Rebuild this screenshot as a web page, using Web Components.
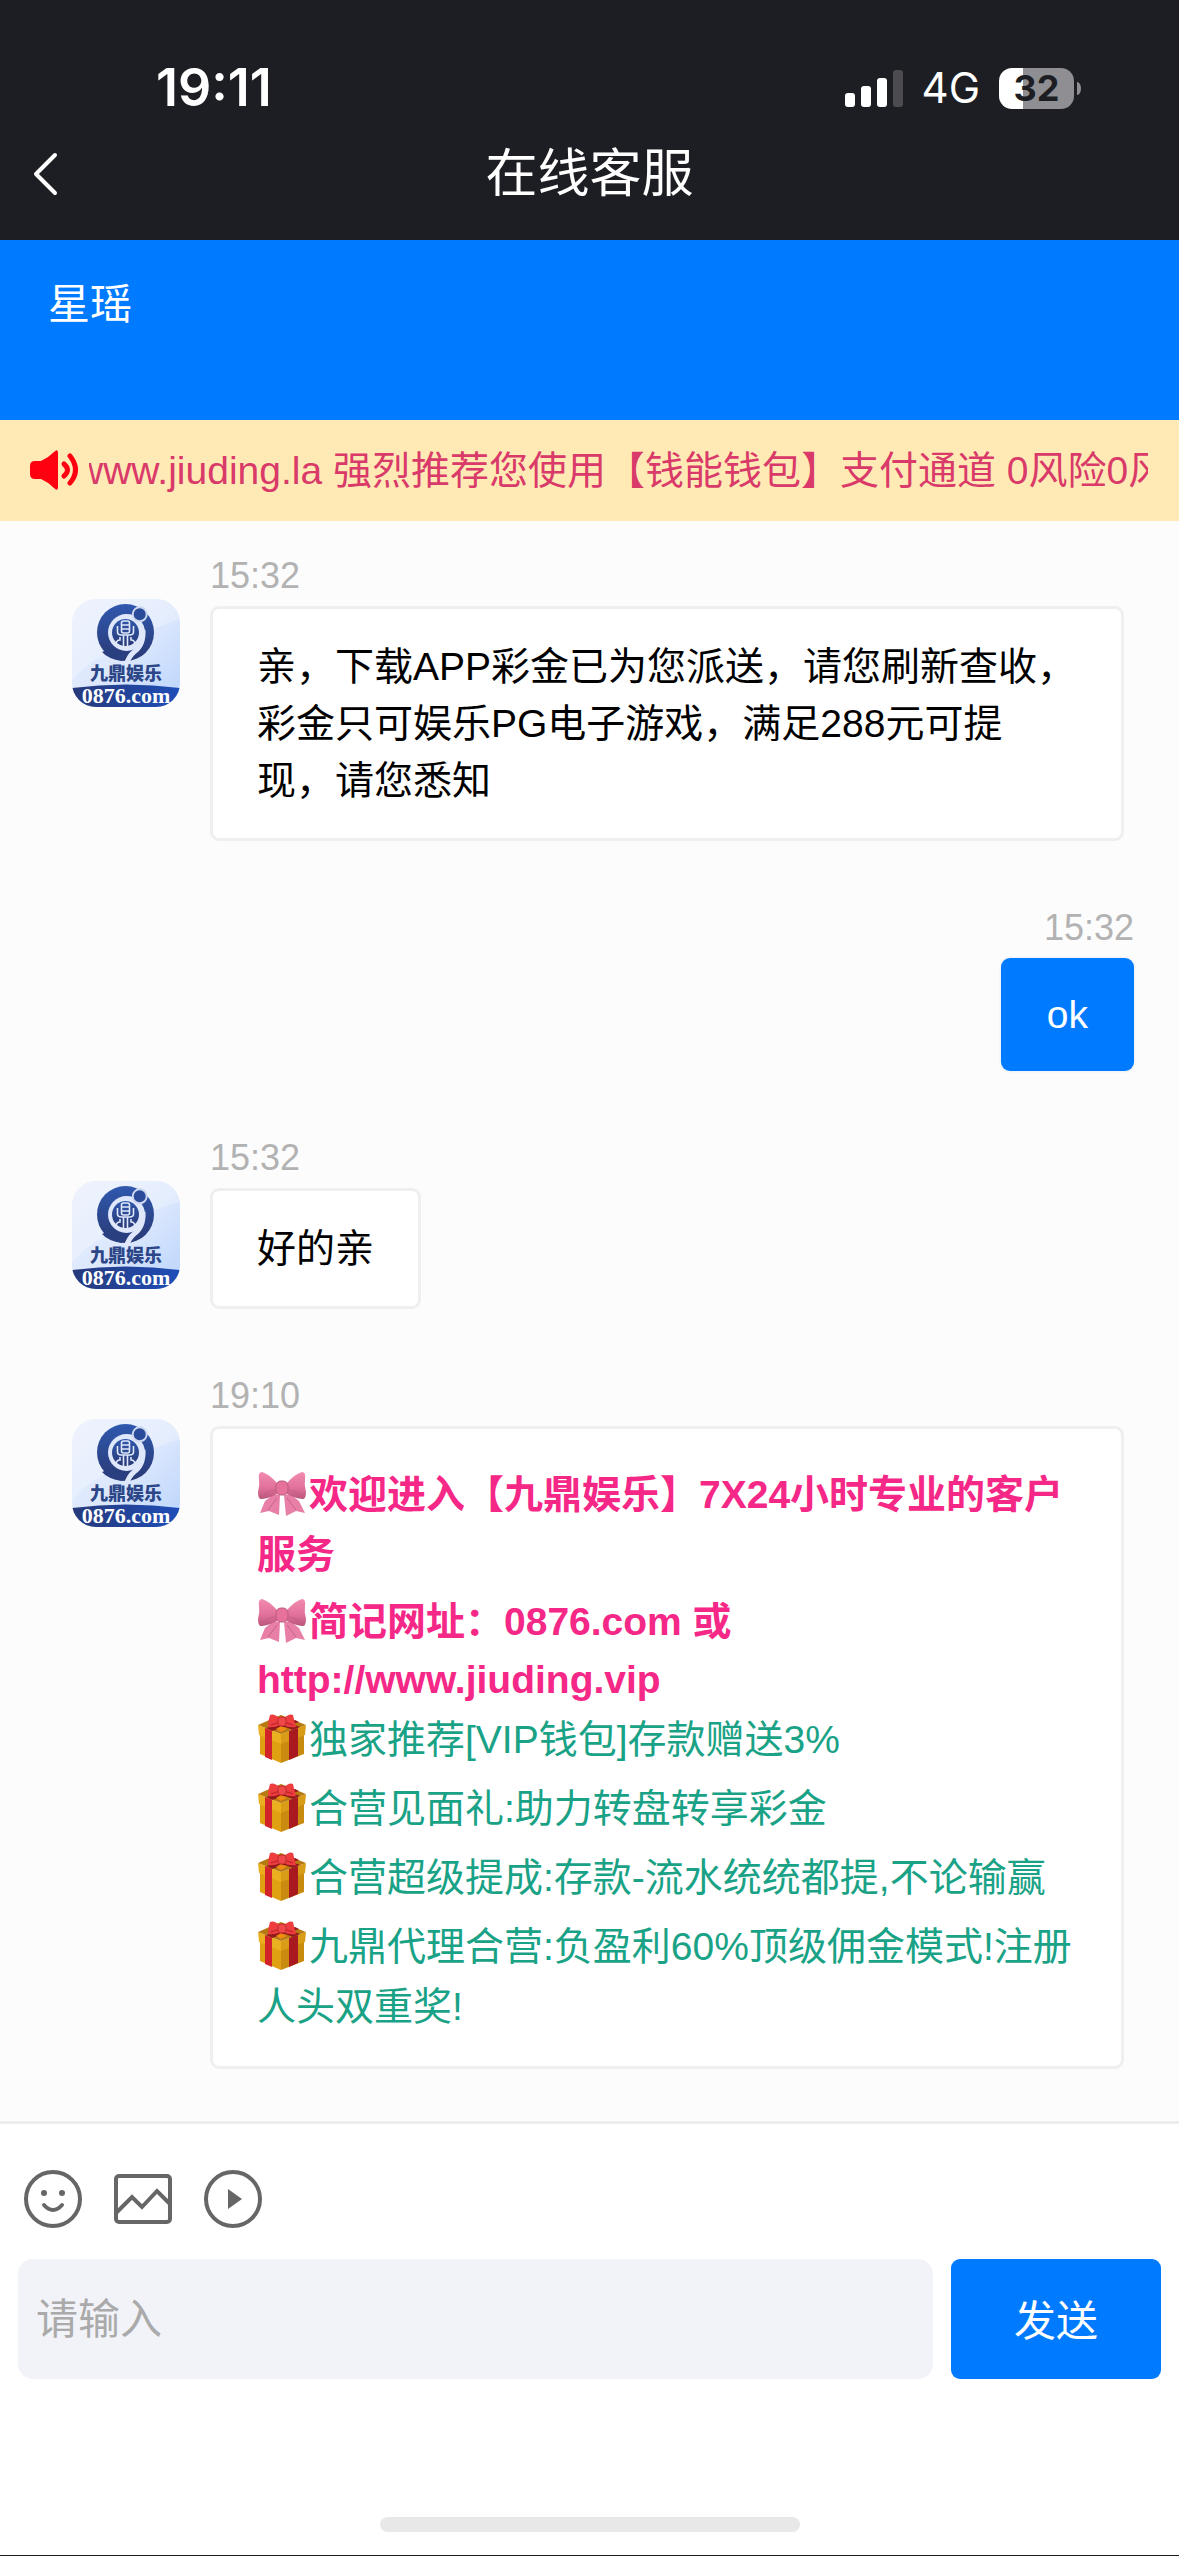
<!DOCTYPE html>
<html lang="zh-CN">
<head>
<meta charset="UTF-8">
<meta name="viewport" content="width=device-width, initial-scale=1.0">
<title>在线客服</title>
<style>
    body {
        margin: 0;
        min-height: 100vh;
        display: flex;
        flex-direction: column;
        background-color: #fcfcfc;
        font-family: "Liberation Sans", "Noto Sans CJK SC", sans-serif;
        color: #000;
    }
</style>
</head>
<body>
    <phone-status time="19:11" network="4G" battery="32"></phone-status>
    <page-header>在线客服</page-header>
    <agent-banner>星瑶</agent-banner>
    <notice-bar offset="14">www.jiuding.la 强烈推荐您使用【钱能钱包】支付通道 0风险0风险</notice-bar>
    <message-list>
        <chat-message time="15:32">亲，下载APP彩金已为您派送，请您刷新查收，彩金只可娱乐PG电子游戏，满足288元可提现，请您悉知</chat-message>
        <chat-message time="15:32" mine>ok</chat-message>
        <chat-message time="15:32">好的亲</chat-message>
        <chat-message time="19:10">
            <promo-line icon="bow">欢迎进入【九鼎娱乐】7X24小时专业的客户服务</promo-line>
            <promo-line icon="bow">简记网址：0876.com 或 <span slot="link">http://www.jiuding.vip</span></promo-line>
            <promo-line icon="gift" tight>独家推荐[VIP钱包]存款赠送3%</promo-line>
            <promo-line icon="gift">合营见面礼:助力转盘转享彩金</promo-line>
            <promo-line icon="gift">合营超级提成:存款-流水统统都提,不论输赢</promo-line>
            <promo-line icon="gift">九鼎代理合营:负盈利60%顶级佣金模式!注册人头双重奖!</promo-line>
        </chat-message>
    </message-list>
    <chat-composer></chat-composer>
    <home-indicator></home-indicator>

<script>
class PhoneStatus extends HTMLElement {
    connectedCallback() {
        this.attachShadow({ mode: 'open' });
        this.shadowRoot.innerHTML = `
            <style>
                :host {
                    display: flex;
                    justify-content: space-between;
                    align-items: center;
                    padding: 58px 98px 22px 156px;
                    background-color: #1d1e23;
                    color: #fff;
                    font-family: Inter, "Liberation Sans", sans-serif;
                }
                .time {
                    font-size: 52px;
                    line-height: 60px;
                    font-weight: 600;
                }
                .right {
                    display: flex;
                    align-items: center;
                    gap: 19px;
                }
                svg {
                    display: block;
                }
                .network {
                    font-size: 42px;
                    line-height: 60px;
                }
                .battery {
                    display: flex;
                    align-items: center;
                    gap: 3px;
                }
                .level {
                    width: 75px;
                    height: 41px;
                    border-radius: 13px;
                    background: linear-gradient(90deg, #fff 32%, #8e8e93 32%);
                    color: #1d1e23;
                    font-size: 36px;
                    line-height: 41px;
                    font-weight: 700;
                    text-align: center;
                }
                .tip {
                    width: 4px;
                    height: 13px;
                    border-radius: 0 4px 4px 0 / 0 7px 7px 0;
                    background-color: #8e8e93;
                }
            </style>
            <div class="time">${this.getAttribute('time')}</div>
            <div class="right">
                <svg width="58" height="38" viewBox="0 0 58 38" fill="#fff">
                    <rect x="0" y="24" width="10" height="14" rx="3"/>
                    <rect x="16" y="17" width="10" height="21" rx="3"/>
                    <rect x="32" y="9" width="10" height="29" rx="3"/>
                    <rect x="48" y="1" width="10" height="37" rx="3" fill="#4c4c50"/>
                </svg>
                <span class="network">${this.getAttribute('network')}</span>
                <div class="battery">
                    <div class="level">${this.getAttribute('battery')}</div>
                    <div class="tip"></div>
                </div>
            </div>
        `;
    }
}

class PageHeader extends HTMLElement {
    connectedCallback() {
        this.attachShadow({ mode: 'open' });
        this.shadowRoot.innerHTML = `
            <style>
                :host {
                    display: grid;
                    grid-template-columns: 90px 1fr 90px;
                    align-items: center;
                    padding: 4px 0 36px;
                    background-color: #1d1e23;
                    color: #fff;
                }
                button {
                    display: flex;
                    padding: 0 0 0 28px;
                    border: none;
                    background: none;
                    cursor: pointer;
                }
                h1 {
                    margin: 0;
                    font-size: 52px;
                    line-height: 60px;
                    font-weight: 400;
                    text-align: center;
                }
            </style>
            <button type="button" aria-label="返回">
                <svg width="30" height="46" viewBox="0 0 30 46" fill="none" stroke="#fff" stroke-width="4" stroke-linecap="round" stroke-linejoin="round">
                    <path d="M27 4 8 23l19 19"/>
                </svg>
            </button>
            <h1><slot></slot></h1>
        `;
    }
}

class AgentBanner extends HTMLElement {
    connectedCallback() {
        this.attachShadow({ mode: 'open' });
        this.shadowRoot.innerHTML = `
            <style>
                :host {
                    display: block;
                    padding: 35px 48px 85px;
                    background-color: #007aff;
                    color: #fff;
                    font-size: 42px;
                    line-height: 60px;
                }
            </style>
            <slot></slot>
        `;
    }
}

class NoticeBar extends HTMLElement {
    connectedCallback() {
        this.attachShadow({ mode: 'open' });
        this.shadowRoot.innerHTML = `
            <style>
                :host {
                    display: flex;
                    align-items: center;
                    gap: 11px;
                    padding: 21px 31px 20px 28px;
                    background-color: #ffeab6;
                    color: #d93a69;
                    font-size: 39px;
                    line-height: 60px;
                }
                svg {
                    flex: none;
                }
                .track {
                    flex: 1;
                    min-width: 0;
                    overflow: hidden;
                    white-space: nowrap;
                }
            </style>
            <svg width="50" height="42" viewBox="0 0 50 42" fill="none" stroke="#ff0010" stroke-width="5" stroke-linecap="round">
                <path d="M7 11h6Q20 8 26 2q4-4 4 1v34q0 5-4 1-6-6-13-9H7q-5 0-5-5v-8q0-5 5-5z" fill="#ff0010" stroke="none"/>
                <path d="M36 14q7 6 0 12"/>
                <path d="M42 6q11 14 0 27"/>
            </svg>
            <div class="track"><slot></slot></div>
        `;

        // Start the ticker part way through its text
        this.shadowRoot.querySelector('.track').scrollLeft = Number(this.getAttribute('offset'));
    }
}

class MessageList extends HTMLElement {
    connectedCallback() {
        this.attachShadow({ mode: 'open' });
        this.shadowRoot.innerHTML = `
            <style>
                :host {
                    flex: 1;
                    display: flex;
                    flex-direction: column;
                    gap: 65px;
                    padding: 33px 45px 48px 72px;
                }
            </style>
            <slot></slot>
        `;
    }
}

class ChatAvatar extends HTMLElement {
    connectedCallback() {
        this.attachShadow({ mode: 'open' });
        this.shadowRoot.innerHTML = `
            <style>
                :host {
                    display: block;
                    flex: none;
                    width: 108px;
                    height: 108px;
                    border-radius: 24px;
                    overflow: hidden;
                }
                svg {
                    display: block;
                }
            </style>
            <svg width="108" height="108" viewBox="0 0 108 108">
                <defs>
                    <linearGradient id="sky" x1="0" y1="0" x2="1" y2="1">
                        <stop offset="0" stop-color="#e9effd"/>
                        <stop offset=".5" stop-color="#dde8fd"/>
                        <stop offset="1" stop-color="#bad4fc"/>
                    </linearGradient>
                    <linearGradient id="navy" x1="0" y1="0" x2="0" y2="1">
                        <stop offset="0" stop-color="#2f58ae"/>
                        <stop offset="1" stop-color="#2a3a75"/>
                    </linearGradient>
                    <linearGradient id="band" x1="0" y1="0" x2="1" y2="0">
                        <stop offset="0" stop-color="#27397a"/>
                        <stop offset="1" stop-color="#1f4eb8"/>
                    </linearGradient>
                </defs>
                <rect width="108" height="108" fill="url(#sky)"/>
                <path d="M0 0h108v20Q60 36 34 55 12 66 0 82z" fill="#fff" opacity=".25"/>
                <circle cx="53.500" cy="33.500" r="28.500" fill="url(#navy)"/>
                <circle cx="54.500" cy="33.500" r="18.500" fill="#dfe7fa"/>
                <path d="M71 31Q72 46 62 53 57 57 54 66" fill="none" stroke="#dfe7fa" stroke-width="5"/>
                <path d="M40 49q8 6 17 4l-7 9q-14-2-20-9z" fill="#2a3f80"/>
                <circle cx="53.500" cy="33.500" r="13.500" fill="url(#navy)"/>
                <g fill="none" stroke="#dfe7fa" stroke-width="1.600">
                    <rect x="49.500" y="22" width="8" height="12" rx="2"/>
                    <path d="M49.500 26h8M49.500 30h8M45.500 27v6q0 3 4 3h8q4 0 4-3v-6M51.500 36v11M55.500 36v11M48 38v3q-4 0-4 5M59 38v3q4 0 4 5"/>
                </g>
                <circle cx="67.700" cy="15.300" r="7" fill="#2a4b99" stroke="#cdd8f0" stroke-width="2"/>
                <text x="54" y="81" text-anchor="middle" font-family="Noto Sans CJK SC, sans-serif" font-size="18" font-weight="900" fill="#2c4688">九鼎娱乐</text>
                <path d="M0 89q54-7 108 0v19H0z" fill="url(#band)"/>
                <text x="54" y="104" text-anchor="middle" font-family="Liberation Serif, serif" font-size="22" font-weight="700" fill="#fff">0876.com</text>
            </svg>
        `;
    }
}

class ChatMessage extends HTMLElement {
    connectedCallback() {
        const mine = this.hasAttribute('mine');
        this.attachShadow({ mode: 'open' });
        this.shadowRoot.innerHTML = `
            <style>
                :host {
                    display: flex;
                    gap: 30px;
                    margin-right: 10px;
                }
                :host([mine]) {
                    justify-content: flex-end;
                    margin-right: 0;
                }
                chat-avatar {
                    margin-top: 45px;
                }
                .body {
                    display: flex;
                    flex-direction: column;
                    align-items: flex-start;
                    gap: 9px;
                    min-width: 0;
                }
                :host([mine]) .body {
                    align-items: flex-end;
                }
                time {
                    color: #b2b2b2;
                    font-size: 36px;
                    line-height: 43px;
                }
                .bubble {
                    padding: 29px 44px;
                    border: 3px solid #efefef;
                    border-radius: 9px;
                    background-color: #fff;
                    font-size: 39px;
                    line-height: 57px;
                }
                :host([mine]) .bubble {
                    padding: 28px 46px;
                    border: none;
                    box-shadow: 0 0 3px #dde3ea;
                    background-color: #007aff;
                    color: #fff;
                }
            </style>
            ${mine ? '' : '<chat-avatar></chat-avatar>'}
            <div class="body">
                <time>${this.getAttribute('time')}</time>
                <div class="bubble"><slot></slot></div>
            </div>
        `;
    }
}

const EMOJI = {
    bow: `
        <svg width="50" height="46" viewBox="0 0 50 46">
            <defs>
                <linearGradient id="silk" x1="0" y1="0" x2="0" y2="1">
                    <stop offset="0" stop-color="#f38bb0"/>
                    <stop offset=".6" stop-color="#e0709a"/>
                    <stop offset="1" stop-color="#b8557a"/>
                </linearGradient>
            </defs>
            <path d="M17 23 8 30 3 42l9-2 10 4 1-20z" fill="#e77fa6"/>
            <path d="m33 23 9 7 6 12-9-2-10 5-2-21z" fill="#e77fa6"/>
            <path d="m20 27-9 12M30 27l9 12" fill="none" stroke="#c7658b" stroke-width="1"/>
            <path d="M20 12Q12 3 5 1 1 1 2 8q1 6-1 13 0 8 4 7 9-1 16-6z" fill="url(#silk)"/>
            <path d="M30 12Q38 3 45 1q4 0 3 7-1 6 1 13 0 8-4 7-9-1-16-6z" fill="url(#silk)"/>
            <path d="M19 19q-6 0-11 4M31 19q6 0 11 4" fill="none" stroke="#bb5c80" stroke-width="1.200" opacity=".5"/>
            <rect x="19" y="10" width="12" height="14" rx="5" fill="#e6719b" stroke="#bd5b80"/>
        </svg>`,
    gift: `
        <svg width="50" height="50" viewBox="0 0 50 50">
            <path d="M3 18v22l21 9V24z" fill="#dfa012"/>
            <path d="M47 18v22l-23 9V24z" fill="#c98a10"/>
            <path d="m1 11 23 9v10L2 21z" fill="#eab020"/>
            <path d="m49 11-25 9v10l24-9z" fill="#d99c16"/>
            <path d="M1 11 24 1l25 10-25 9z" fill="#b77a12"/>
            <path d="m12 7 24 9 7-3L18 4zM38 6 9 14l6 3 27-9z" fill="#921a1c"/>
            <path d="m8 14 7 3v29l-7-3z" fill="#d2232a"/>
            <path d="m32 17 9-3v28l-9 4z" fill="#a81a20"/>
            <path d="m19 15 5-3 6 3-6 3z" fill="#ef8a12"/>
            <path d="M24 5Q17-1 13 1q-2 6-2 12 8 1 13-3zM26 5q6-6 10-4 1 5 3 12-9 1-13-3z" fill="#ee3d3f"/>
            <path d="m23 8-9 3m13-3 9 3" stroke="#b9252c" stroke-width="1.300"/>
            <rect x="21" y="3" width="8" height="9" rx="3" fill="#f04848" stroke="#bd2a30"/>
        </svg>`
};

class PromoLine extends HTMLElement {
    connectedCallback() {
        this.attachShadow({ mode: 'open' });
        this.shadowRoot.innerHTML = `
            <style>
                :host {
                    display: block;
                    padding-top: 9px;
                    line-height: 60px;
                    color: #1aa286;
                }
                :host([icon="bow"]) {
                    padding-top: 7px;
                    color: #f52887;
                    font-weight: 700;
                }
                :host([tight]) {
                    padding-top: 3px;
                }
                .icon {
                    display: inline-flex;
                    align-items: center;
                    width: 52px;
                    height: 58px;
                    vertical-align: top;
                }
                ::slotted([slot="link"]) {
                    display: block;
                    line-height: 55px;
                }
            </style>
            <span class="icon">${EMOJI[this.getAttribute('icon')]}</span><slot></slot><slot name="link"></slot>
        `;
    }
}

class ChatComposer extends HTMLElement {
    connectedCallback() {
        this.attachShadow({ mode: 'open' });
        this.shadowRoot.innerHTML = `
            <style>
                :host {
                    display: flex;
                    flex-direction: column;
                    gap: 30px;
                    padding: 45px 18px 0;
                    border-top: 3px solid #ededed;
                    background-color: #fff;
                }
                .tools {
                    display: flex;
                    gap: 30px;
                    padding-left: 5px;
                }
                button {
                    padding: 0;
                    border: none;
                    background: none;
                    cursor: pointer;
                }
                svg {
                    display: block;
                }
                form {
                    display: flex;
                    gap: 18px;
                }
                input,
                .send {
                    box-sizing: border-box;
                    height: 120px;
                    font-family: inherit;
                    font-size: 42px;
                }
                input {
                    flex: 1;
                    min-width: 0;
                    padding: 2px 18px 0;
                    border: none;
                    border-radius: 15px;
                    outline: none;
                    background-color: #f2f3f8;
                }
                input::placeholder {
                    color: #aaa;
                    opacity: 1;
                }
                .send {
                    width: 210px;
                    padding-bottom: 4px;
                    border-radius: 9px;
                    background-color: #007aff;
                    color: #fff;
                }
            </style>
            <div class="tools">
                <button type="button" aria-label="表情">
                    <svg width="60" height="60" viewBox="0 0 60 60" fill="none" stroke="#666" stroke-width="4" stroke-linecap="round">
                        <circle cx="30" cy="30" r="27"/>
                        <path d="M21 36q9 10 18 0"/>
                        <circle cx="21" cy="24" r="3" fill="#666" stroke="none"/>
                        <circle cx="39" cy="24" r="3" fill="#666" stroke="none"/>
                    </svg>
                </button>
                <button type="button" aria-label="图片">
                    <svg width="60" height="60" viewBox="0 0 60 60" fill="none" stroke="#666" stroke-width="4">
                        <rect x="3" y="7" width="54" height="46" rx="3"/>
                        <path d="M3 44 19 28l10 10 15-16 13 13"/>
                    </svg>
                </button>
                <button type="button" aria-label="视频">
                    <svg width="60" height="60" viewBox="0 0 60 60" fill="none" stroke="#666" stroke-width="4">
                        <circle cx="30" cy="30" r="27"/>
                        <path d="m25 20 14 10-14 10z" fill="#666" stroke="none"/>
                    </svg>
                </button>
            </div>
            <form>
                <input type="text" placeholder="请输入" aria-label="请输入">
                <button class="send" type="button">发送</button>
            </form>
        `;
    }
}

class HomeIndicator extends HTMLElement {
    connectedCallback() {
        this.attachShadow({ mode: 'open' });
        this.shadowRoot.innerHTML = `
            <style>
                :host {
                    display: flex;
                    justify-content: center;
                    padding: 138px 0 23px;
                    border-bottom: 1px solid #1d1e23;
                    background-color: #fff;
                }
                div {
                    width: 420px;
                    height: 15px;
                    border-radius: 8px;
                    background-color: #e8e8e8;
                }
            </style>
            <div></div>
        `;
    }
}

customElements.define('phone-status', PhoneStatus);
customElements.define('page-header', PageHeader);
customElements.define('agent-banner', AgentBanner);
customElements.define('notice-bar', NoticeBar);
customElements.define('message-list', MessageList);
customElements.define('chat-avatar', ChatAvatar);
customElements.define('chat-message', ChatMessage);
customElements.define('promo-line', PromoLine);
customElements.define('chat-composer', ChatComposer);
customElements.define('home-indicator', HomeIndicator);
</script>
</body>
</html>
